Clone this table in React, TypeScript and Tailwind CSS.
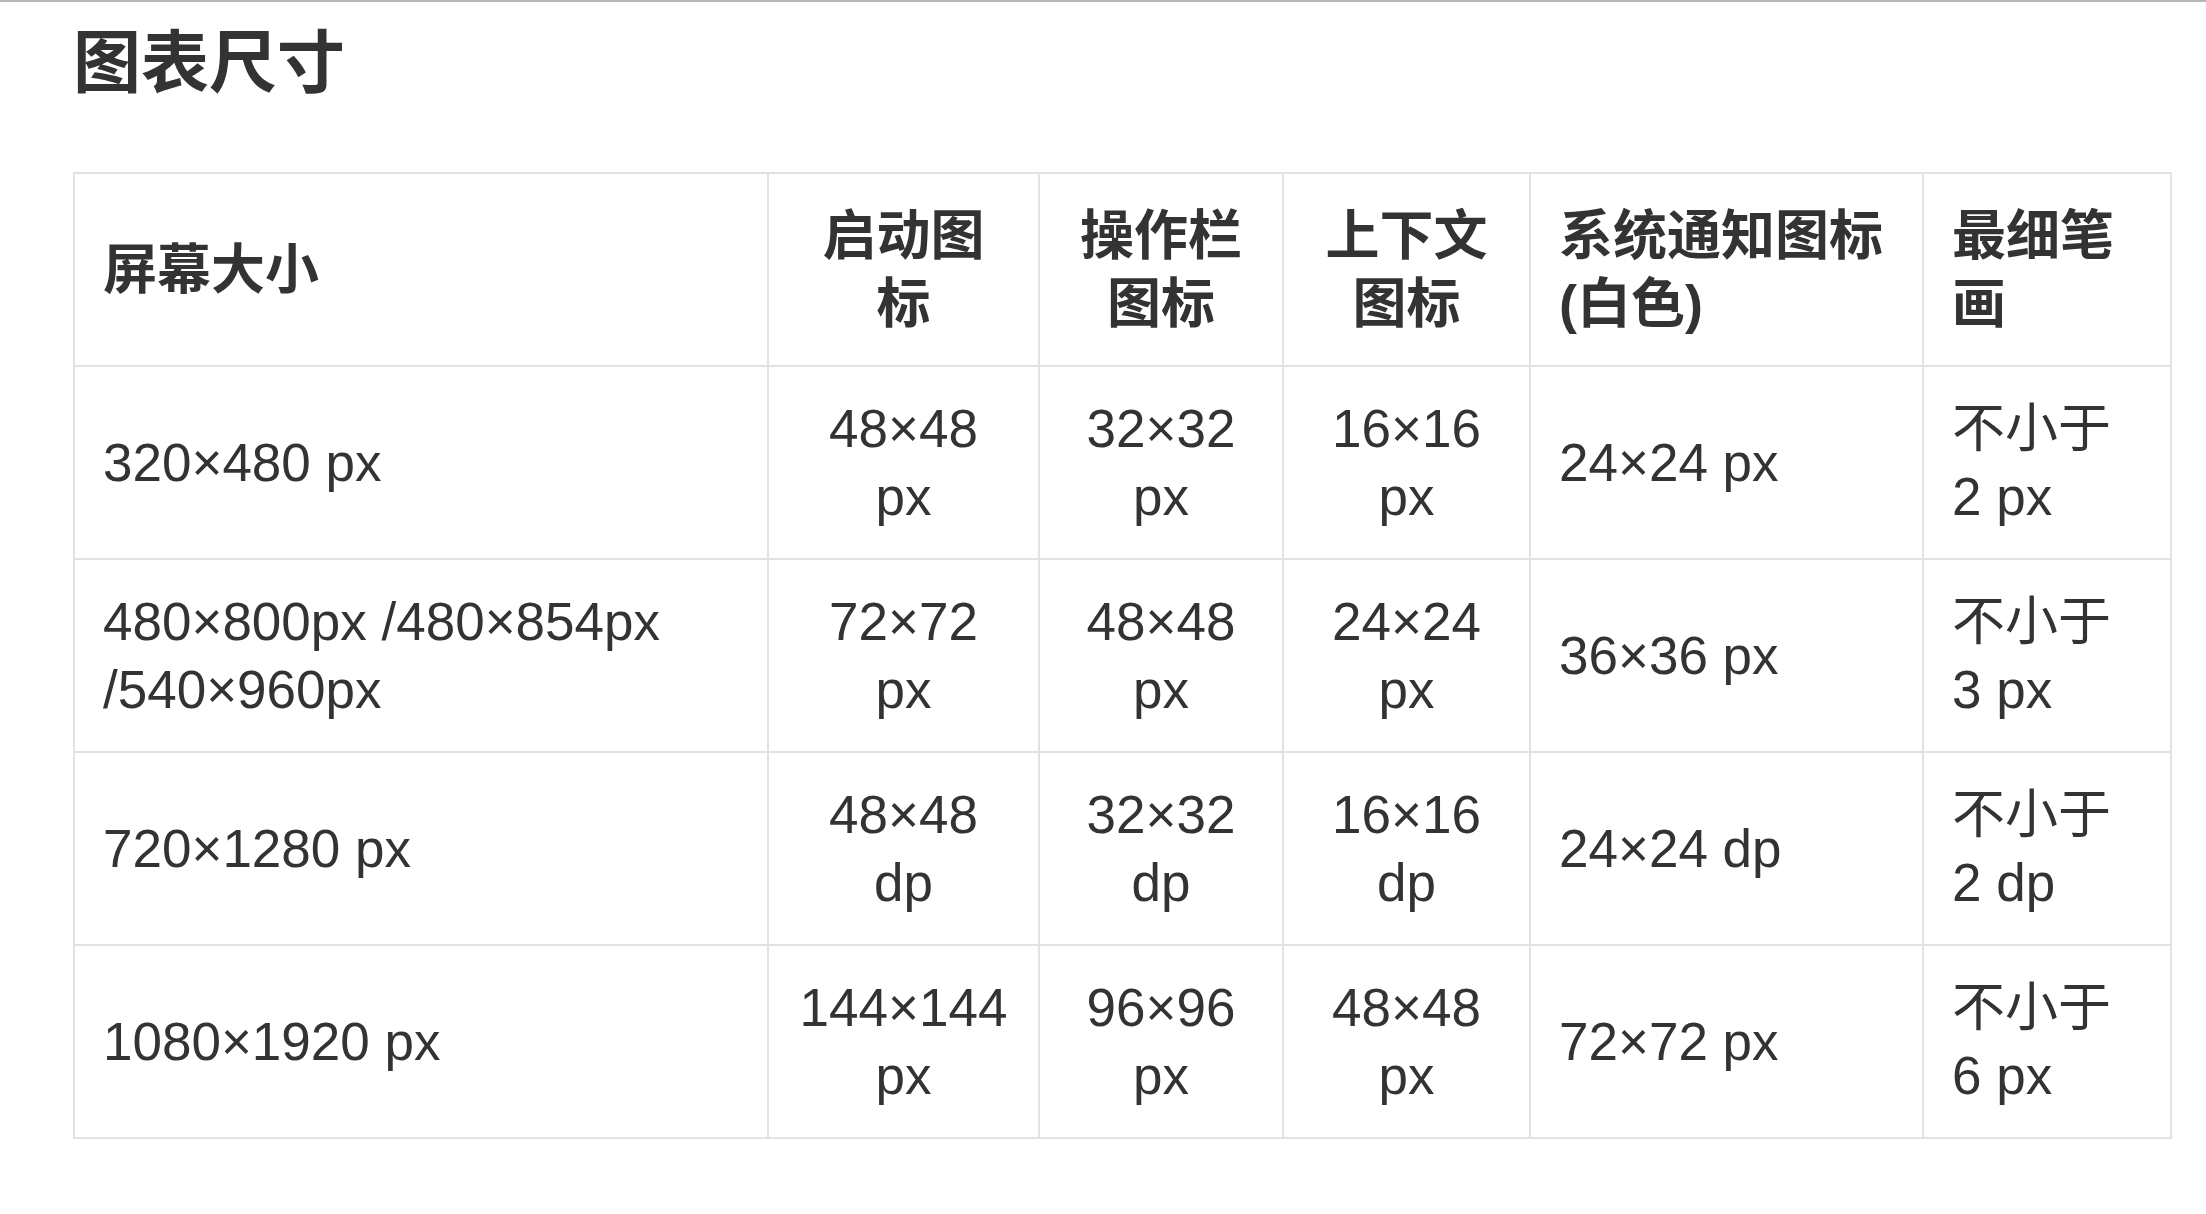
const head = [
  { label: "屏幕大小", align: "text-left" },
  { label: "启动图标", align: "text-center" },
  { label: "操作栏图标", align: "text-center" },
  { label: "上下文图标", align: "text-center" },
  { label: "系统通知图标(白色)", align: "text-left" },
  { label: "最细笔画", align: "text-left" },
]

const rows = [
  ["320×480 px", "48×48 px", "32×32 px", "16×16 px", "24×24 px", "2 px"],
  ["480×800px /480×854px /540×960px", "72×72 px", "48×48 px", "24×24 px", "36×36 px", "3 px"],
  ["720×1280 px", "48×48 dp", "32×32 dp", "16×16 dp", "24×24 dp", "2 dp"],
  ["1080×1920 px", "144×144 px", "96×96 px", "48×48 px", "72×72 px", "6 px"],
]

const cell = "border-2 border-[#e2e2e2] pl-[28px] pr-[28px] pt-[28px] pb-[27px] align-middle"

export default function App() {
  return (
    <div
      className="min-h-[1214px] bg-white text-[#333333]"
      style={{ fontFamily: '"Liberation Sans", "Noto Sans CJK SC", sans-serif' }}
    >
      <div className="h-[2px] bg-[#b4b6bc]" />
      <div className="pl-[73px] pr-[34px]">
        <h2 className="mt-[26px] text-[68px] leading-[70px] font-bold">图表尺寸</h2>
        <table className="mt-[74px] w-[2097px] table-fixed border-collapse text-[53px] leading-[68px]">
          <colgroup>
            <col className="w-[694px]" />
            <col className="w-[271px]" />
            <col className="w-[244px]" />
            <col className="w-[247px]" />
            <col className="w-[393px]" />
            <col className="w-[248px]" />
          </colgroup>
          <thead>
            <tr>
              {head.map((h) => (
                <th key={h.label} className={`${cell} ${h.align} text-[54px] font-bold`}>
                  {h.label}
                </th>
              ))}
            </tr>
          </thead>
          <tbody>
            {rows.map((row, i) => (
              <tr key={i}>
                {row.map((v, j) => (
                  <td key={j} className={`${cell} ${head[j].align}`}>
                    {j === 5 ? (
                      <>
                        不小于<span className="whitespace-nowrap">{v}</span>
                      </>
                    ) : (
                      v
                    )}
                  </td>
                ))}
              </tr>
            ))}
          </tbody>
        </table>
      </div>
    </div>
  )
}
